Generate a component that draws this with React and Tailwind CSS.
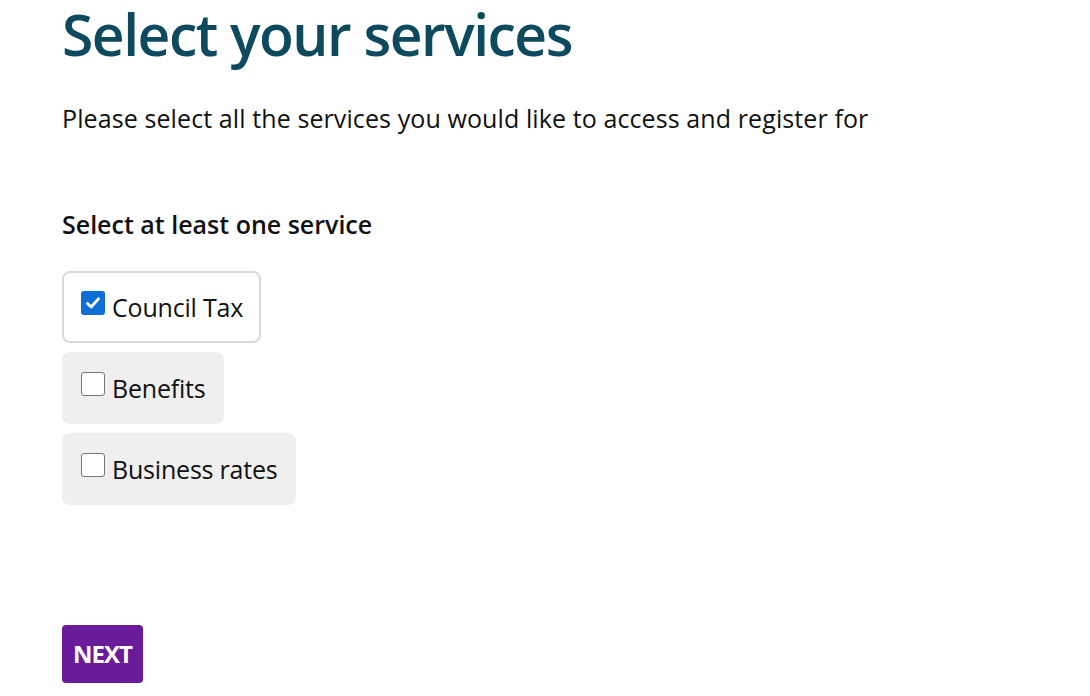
import React from "react";

function Box({ checked, label }) {
  return (
    <div
      className={
        "inline-flex items-center h-[72px] rounded-[8px] pl-[17px] pr-[16px] " +
        (checked ? "bg-white border-[2px] border-[#d9d9d9]" : "bg-[#efefef] border-[2px] border-transparent")
      }
    >
      {checked ? (
        <span className="w-[24px] h-[24px] rounded-[3px] bg-[#0b6fd6] flex items-center justify-center -mt-[8px]">
          <svg width="18" height="18" viewBox="0 0 18 18">
            <path d="M3.5 9.5 L7.2 13 L14.5 4.8" fill="none" stroke="white" strokeWidth="2.8" strokeLinecap="round" strokeLinejoin="round" />
          </svg>
        </span>
      ) : (
        <span className="w-[24px] h-[24px] rounded-[3px] bg-white border-[1.5px] border-[#767676] -mt-[8px]" />
      )}
      <span className="ml-[7px] text-[25px] tracking-[-0.2px] text-[#111]">{label}</span>
    </div>
  );
}

export default function App() {
  return (
    <div className="min-h-[696px] w-[1090px] bg-white pl-[62px]" style={{ fontFamily: '"Open Sans", sans-serif' }}>
      <h1 className="text-[57px] font-semibold leading-[1.2] tracking-[-1.5px] text-[#0d4a5e]">Select your services</h1>
      <p className="mt-[38px] text-[25px] leading-none tracking-[0.1px] text-[#111]">Please select all the services you would like to access and register for</p>
      <p className="mt-[81px] text-[25px] font-semibold leading-none text-[#111]">Select at least one service</p>
      <div className="mt-[34px] flex flex-col items-start gap-[9px]">
        <Box checked label="Council Tax" />
        <Box label="Benefits" />
        <Box label="Business rates" />
      </div>
      <button className="mt-[120px] h-[58px] px-[11px] rounded-[4px] bg-[#6a1b9a] text-white text-[24px] font-bold tracking-[-1px]">NEXT</button>
    </div>
  );
}
